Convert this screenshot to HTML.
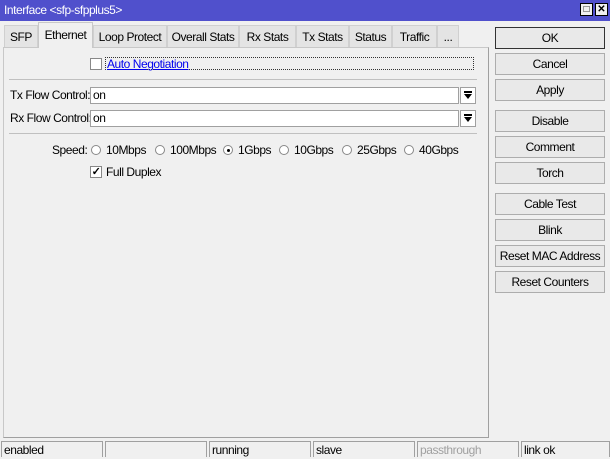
<!DOCTYPE html>
<html><head><style>
*{box-sizing:border-box;margin:0;padding:0}
body{width:610px;height:457px;background:#f0f0f0;font-family:"Liberation Sans",sans-serif;font-size:12px;letter-spacing:-0.45px;color:#000;position:relative;overflow:hidden;white-space:nowrap}
.a{position:absolute}
.title{left:0;top:0;width:610px;height:21px;background:#5050cc;color:#fff;font-size:12px;line-height:21px;padding-left:4px}
.wb{top:3px;width:13px;height:13px;background:#f0f0f0;border:1px solid #000;color:#000;font-size:10px;line-height:11px;text-align:center;font-weight:bold;letter-spacing:0}
.tab{top:25px;height:22px;background:#e4e4e4;border:1px solid #d0d0d0;border-bottom:none;line-height:22px;text-align:center}
.tab.sel{top:22px;height:26px;background:#f0f0f0;border-color:#c8c8c8;z-index:2;line-height:24px}
.panel{left:3px;top:47px;width:486px;height:391px;border:1px solid #c8c8c8;border-bottom:1px solid #a0a0a0;border-right:1px solid #a0a0a0}
.btn{left:495px;width:110px;height:22px;border:1px solid #adadad;background:#e9e9e9;text-align:center;line-height:20px}
.inp{left:90px;width:369px;height:17px;background:#fff;border:1px solid #a0a0a0;line-height:15px;padding-left:2px}
.dd{left:460px;width:16px;height:17px;background:#fff;border:1px solid #a0a0a0}
.dd:before{content:"";position:absolute;left:3px;top:3px;width:8px;height:2px;background:#000}
.dd:after{content:"";position:absolute;left:3px;top:6px;border-left:4px solid transparent;border-right:4px solid transparent;border-top:5px solid #000}
.sep{height:1px;background:#c0c0c0;left:9px;width:468px}
.rad{width:10px;height:10px;border-radius:50%;border:1px solid #888;background:#fff;top:145px}
.cell{top:441px;height:16px;border:1px solid #a0a0a0;border-bottom:none;line-height:17px;padding-left:2px}
</style></head><body>
<div class="a title">Interface &lt;sfp-sfpplus5&gt;</div>
<div class="a wb" style="left:580px">□</div>
<div class="a wb" style="left:595px">✕</div>

<div class="a panel"></div>
<div class="a tab" style="left:4px;width:34px">SFP</div>
<div class="a tab sel" style="left:38px;width:55px">Ethernet</div>
<div class="a tab" style="left:93px;width:74px">Loop Protect</div>
<div class="a tab" style="left:167px;width:72px">Overall Stats</div>
<div class="a tab" style="left:239px;width:57px">Rx Stats</div>
<div class="a tab" style="left:296px;width:53px">Tx Stats</div>
<div class="a tab" style="left:349px;width:43px">Status</div>
<div class="a tab" style="left:392px;width:45px">Traffic</div>
<div class="a tab" style="left:437px;width:22px">...</div>

<div class="a" style="left:90px;top:58px;width:12px;height:12px;border:1px solid #888;background:#fff"></div>
<div class="a" style="left:105px;top:57px;width:369px;height:13px;border:1px dotted #333;color:#0000ee;line-height:12px;padding-left:1px;text-decoration:underline">Auto Negotiation</div>
<div class="a sep" style="top:79px"></div>

<div class="a" style="left:10px;top:88px">Tx Flow Control:</div>
<div class="a inp" style="top:87px">on</div><div class="a dd" style="top:87px"></div>
<div class="a" style="left:10px;top:111px">Rx Flow Control:</div>
<div class="a inp" style="top:110px">on</div><div class="a dd" style="top:110px"></div>
<div class="a sep" style="top:133px"></div>

<div class="a" style="left:52px;top:143px">Speed:</div>
<div class="a rad" style="left:91px"></div><div class="a" style="left:106px;top:143px">10Mbps</div>
<div class="a rad" style="left:155px"></div><div class="a" style="left:170px;top:143px">100Mbps</div>
<div class="a rad" style="left:223px"><div class="a" style="left:3px;top:3px;width:3px;height:3px;background:#000;border-radius:50%"></div></div><div class="a" style="left:238px;top:143px">1Gbps</div>
<div class="a rad" style="left:279px"></div><div class="a" style="left:294px;top:143px">10Gbps</div>
<div class="a rad" style="left:342px"></div><div class="a" style="left:357px;top:143px">25Gbps</div>
<div class="a rad" style="left:404px"></div><div class="a" style="left:419px;top:143px">40Gbps</div>

<div class="a" style="left:90px;top:166px;width:12px;height:12px;border:1px solid #888;background:#fff;font-size:11px;line-height:10px;text-align:center;font-weight:bold">✓</div>
<div class="a" style="left:106px;top:165px">Full Duplex</div>

<div class="a btn" style="top:27px;border:1px solid #333">OK</div>
<div class="a btn" style="top:53px">Cancel</div>
<div class="a btn" style="top:79px">Apply</div>
<div class="a btn" style="top:110px">Disable</div>
<div class="a btn" style="top:136px">Comment</div>
<div class="a btn" style="top:162px">Torch</div>
<div class="a btn" style="top:193px">Cable Test</div>
<div class="a btn" style="top:219px">Blink</div>
<div class="a btn" style="top:245px">Reset MAC Address</div>
<div class="a btn" style="top:271px">Reset Counters</div>

<div class="a cell" style="left:1px;width:102px">enabled</div>
<div class="a cell" style="left:105px;width:102px"></div>
<div class="a cell" style="left:209px;width:102px">running</div>
<div class="a cell" style="left:313px;width:102px">slave</div>
<div class="a cell" style="left:417px;width:102px;color:#a0a0a0">passthrough</div>
<div class="a cell" style="left:521px;width:89px">link ok</div>
</body></html>
